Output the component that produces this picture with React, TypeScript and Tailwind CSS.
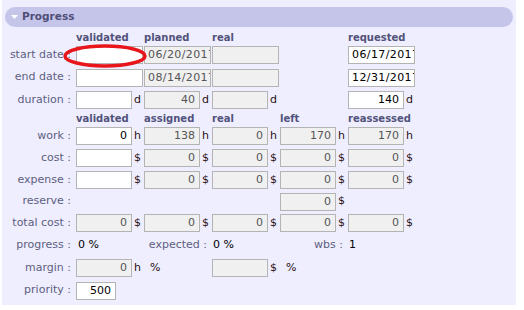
import React from "react"

const grid = "grid grid-cols-[72px_68px_68px_68px_68px_68px] items-center"

type FieldProps = {
  value?: string
  disabled?: boolean
  width?: string
  unit?: string
  date?: boolean
}

function Field({ value = "", disabled, width = "w-[56px]", unit, date }: FieldProps) {
  return (
    <div className="flex items-center">
      <div
        className={`${width} h-[18px] border border-[#b4b4b4] overflow-hidden whitespace-nowrap leading-[16px] ${
          disabled ? "bg-[#f0f0f0] text-[#555]" : "bg-white text-black"
        } ${date ? "pl-[3px] text-left tracking-[0.4px]" : "pr-[4px] text-right"}`}
      >
        {value}
      </div>
      {unit && <span className="ml-[2px] text-[#2a1010]">{unit}</span>}
    </div>
  )
}

function Label({ children }: { children: React.ReactNode }) {
  return <div className="pr-[5px] text-right text-[#5e5e80] whitespace-nowrap">{children}</div>
}

function Head({ children }: { children?: React.ReactNode }) {
  return <div className="font-bold text-[10px] text-[#52527a] whitespace-nowrap">{children}</div>
}

export default function App() {
  return (
    <div className="w-[524px] h-[310px] bg-white pl-[2px] font-['DejaVu_Sans',Verdana,sans-serif] text-[11px]">
      <div className="relative w-[514px] h-[305px] bg-[#eeeeff] pt-[7px]">
        <div className="ml-[3px] w-[508px] h-[20px] rounded-full bg-[#c5c5ea] flex items-center pl-[6px] gap-[4px]">
          <svg width="7" height="5" viewBox="0 0 7 5">
            <path d="M0 0 H7 L3.5 4 Z" fill="#ffffff" />
          </svg>
          <span className="font-bold text-[#4e4e78] text-[10.5px]">Progress</span>
        </div>

        <div className="pl-[2px]">
          <div className={`${grid} h-[17px] pt-[3px]`}>
            <div />
            <Head>validated</Head>
            <Head>planned</Head>
            <Head>real</Head>
            <Head />
            <Head>requested</Head>
          </div>

          <div className={`${grid} h-[22px]`}>
            <Label>start date :</Label>
            <Field width="w-[67px]" />
            <Field width="w-[67px]" disabled date value="06/20/2017" />
            <Field width="w-[67px]" disabled />
            <div />
            <Field width="w-[67px]" date value="06/17/2017" />
          </div>
          <div className={`${grid} h-[23px]`}>
            <Label>end date :</Label>
            <Field width="w-[67px]" />
            <Field width="w-[67px]" disabled date value="08/14/2017" />
            <Field width="w-[67px]" disabled />
            <div />
            <Field width="w-[67px]" date value="12/31/2017" />
          </div>
          <div className={`${grid} h-[22px]`}>
            <Label>duration :</Label>
            <Field unit="d" />
            <Field disabled value="40" unit="d" />
            <Field disabled unit="d" />
            <div />
            <Field value="140" unit="d" />
          </div>

          <div className={`${grid} h-[14px]`}>
            <div />
            <Head>validated</Head>
            <Head>assigned</Head>
            <Head>real</Head>
            <Head>left</Head>
            <Head>reassessed</Head>
          </div>

          <div className={`${grid} h-[22px]`}>
            <Label>work :</Label>
            <Field value="0" unit="h" />
            <Field disabled value="138" unit="h" />
            <Field disabled value="0" unit="h" />
            <Field disabled value="170" unit="h" />
            <Field disabled value="170" unit="h" />
          </div>
          <div className={`${grid} h-[22px]`}>
            <Label>cost :</Label>
            <Field unit="$" />
            <Field disabled value="0" unit="$" />
            <Field disabled value="0" unit="$" />
            <Field disabled value="0" unit="$" />
            <Field disabled value="0" unit="$" />
          </div>
          <div className={`${grid} h-[22px]`}>
            <Label>expense :</Label>
            <Field unit="$" />
            <Field disabled value="0" unit="$" />
            <Field disabled value="0" unit="$" />
            <Field disabled value="0" unit="$" />
            <Field disabled value="0" unit="$" />
          </div>
          <div className={`${grid} h-[21px]`}>
            <Label>reserve :</Label>
            <div />
            <div />
            <div />
            <Field disabled value="0" unit="$" />
            <div />
          </div>
          <div className={`${grid} h-[22px]`}>
            <Label>total cost :</Label>
            <Field disabled value="0" unit="$" />
            <Field disabled value="0" unit="$" />
            <Field disabled value="0" unit="$" />
            <Field disabled value="0" unit="$" />
            <Field disabled value="0" unit="$" />
          </div>
          <div className={`${grid} h-[23px]`}>
            <Label>progress :</Label>
            <div className="pl-[2px] text-black">0 %</div>
            <Label>expected :</Label>
            <div className="pl-[1px] text-black">0 %</div>
            <Label>wbs :</Label>
            <div className="pl-[1px] text-black">1</div>
          </div>
          <div className={`${grid} h-[22px]`}>
            <Label>margin :</Label>
            <div className="flex items-center">
              <Field disabled value="0" unit="h" />
              <span className="ml-[9px] text-[#2a1010]">%</span>
            </div>
            <div />
            <div className="flex items-center">
              <Field disabled unit="$" />
              <span className="ml-[9px] text-[#2a1010]">%</span>
            </div>
            <div />
            <div />
          </div>
          <div className={`${grid} h-[23px]`}>
            <Label>priority :</Label>
            <Field width="w-[40px]" value="500" />
          </div>
        </div>

        <svg className="absolute left-[61px] top-[44px]" width="84" height="24" viewBox="0 0 84 24">
          <ellipse cx="42" cy="12" rx="40" ry="10" fill="none" stroke="#e8151b" strokeWidth="3.5" />
        </svg>
      </div>
    </div>
  )
}
